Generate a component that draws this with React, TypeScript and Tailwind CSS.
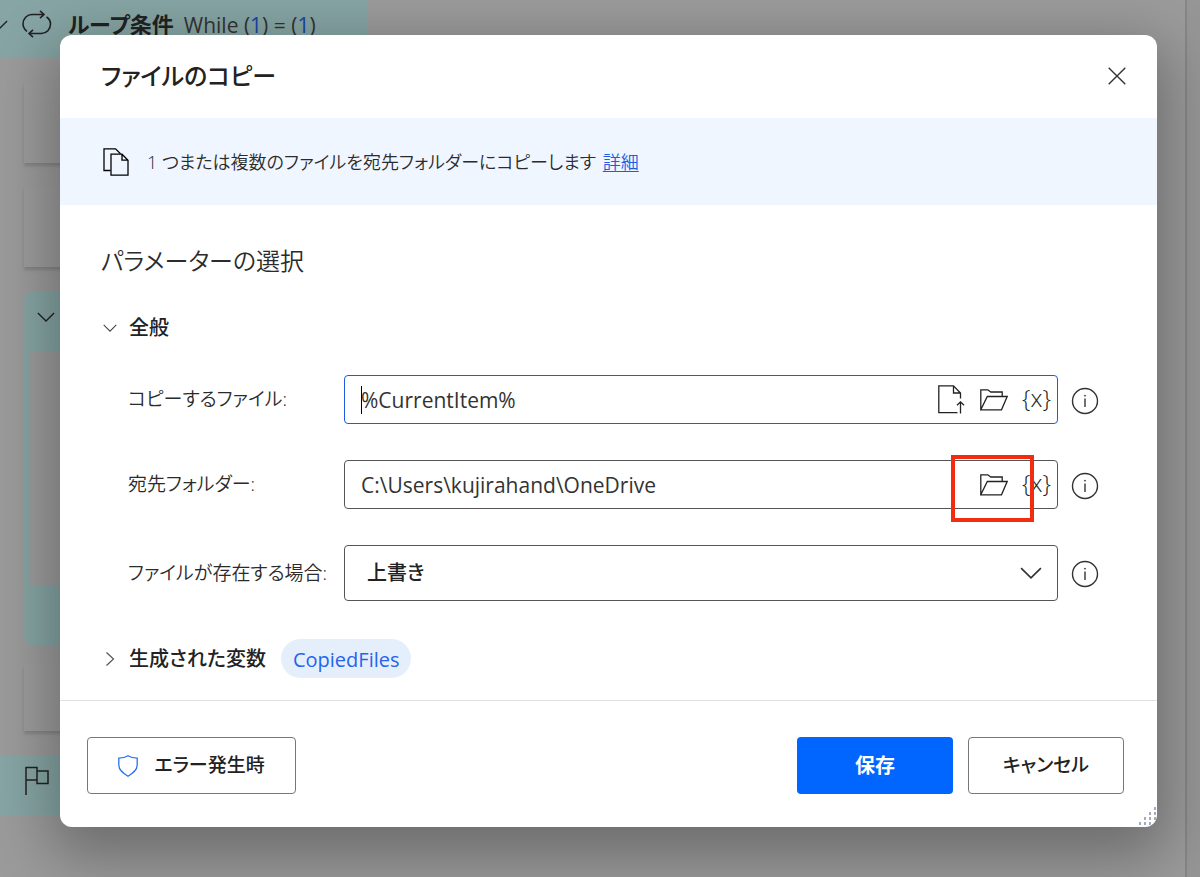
import type { ReactNode } from 'react';

const stroke = {
  fill: 'none',
  stroke: 'currentColor',
  'aria-hidden': true,
} as const;

function LoopIcon() {
  return (
    <svg {...stroke} width="30" height="28" viewBox="0 0 30 28" strokeWidth="1.6">
      <path d="M5 21.500C2 19 1 16.500 1 14 1 8.500 5 4.500 10 4.500H22M18 .8l4 3.700-4 3.700" />
      <path d="M24.500 7c3 2 4 4.500 4 7 0 5.500-4 9.500-9 9.500H7M11 19.800l-4 3.700 4 3.700" />
    </svg>
  );
}

function FlagIcon() {
  return (
    <svg {...stroke} width="24" height="30" viewBox="0 0 24 30" strokeWidth="1.5">
      <path d="M1 29V1.500h11v12.500H1M12 5h11v12.500H12V14" />
    </svg>
  );
}

function ChevronDown({ size, className }: { size: number; className?: string }) {
  return (
    <svg {...stroke} width={size} height={size} viewBox="0 0 20 20" strokeWidth="1.5" className={className}>
      <path d="M1 5.500l9 9 9-9" />
    </svg>
  );
}

function ChevronRight() {
  return (
    <svg {...stroke} width="14" height="14" viewBox="0 0 14 14" strokeWidth="1.2" className="text-[#555]">
      <path d="M3.500 .5l7 6.500-7 6.500" />
    </svg>
  );
}

function CloseIcon() {
  return (
    <svg {...stroke} width="18" height="18" viewBox="0 0 18 18" strokeWidth="1.4" className="text-[#333]">
      <path d="M.7.7l16.600 16.600M17.300.7L.7 17.300" />
    </svg>
  );
}

function CopyIcon() {
  return (
    <svg {...stroke} width="26" height="28" viewBox="0 0 26 28" strokeWidth="1.300">
      <path d="M7.500 22.500H1V.8h11.500l5 5" />
      <path d="M8 6.200h11l6 6V27.200H8zM19 6.200v6h6" />
    </svg>
  );
}

function FileUploadIcon() {
  return (
    <svg {...stroke} width="28" height="30" viewBox="0 0 28 30" strokeWidth="1.3">
      <path d="M19.500 27.700H.8V.8h14.700l7 7.200v5.500M15.500.8V8h7" />
      <path d="M22.500 28.500V17M19 20.300l3.500-3.500 3.500 3.500" />
    </svg>
  );
}

function FolderIcon() {
  return (
    <svg {...stroke} width="28" height="22" viewBox="0 0 28 22" strokeWidth="1.3">
      <path d="M.8 20.800V.8h7l3 2.200h11.400v4.500M.8 20.800L7.300 7.500h19.900l-5.700 13.300z" />
    </svg>
  );
}

function InfoIcon() {
  return (
    <svg {...stroke} width="28" height="28" viewBox="0 0 28 28" strokeWidth="1.4" className="text-[#333]">
      <circle cx="14" cy="14" r="12.500" />
      <path d="M14 11.500v8.500" />
      <circle cx="14" cy="8.700" r=".6" fill="currentColor" strokeWidth=".6" />
    </svg>
  );
}

function ShieldIcon() {
  return (
    <svg {...stroke} width="20" height="22" viewBox="0 0 20 22" strokeWidth="1.3">
      <path d="M10 .8C7.500 2.400 4 3.100.8 3.200V10c0 5.500 4.700 8.500 9.200 11.200 4.500-2.700 9.200-5.700 9.200-11.200V3.200C16 3.100 12.500 2.400 10 .8z" />
    </svg>
  );
}

function ResizeGrip() {
  const dots = [0, 1, 2, 3].flatMap((row) =>
    Array.from({ length: row + 1 }, (_, i) => ({ x: 17 - i * 5, y: row * 5 })),
  );
  return (
    <svg aria-hidden width="20" height="20" viewBox="0 0 20 20" className="absolute right-0 bottom-0">
      {dots.map((d) => (
        <rect key={`${d.x}-${d.y}`} x={d.x} y={d.y} width="2" height="3" fill="#a3acbb" />
      ))}
    </svg>
  );
}

function IconButton({ label, children }: { label: string; children: ReactNode }) {
  return (
    <button type="button" aria-label={label} className="flex shrink-0 items-center justify-center">
      {children}
    </button>
  );
}

function VariableButton() {
  return (
    <button type="button" className="pb-1 text-2xl leading-none font-light">
      {'{x}'}
    </button>
  );
}

function Field({ id, label, children }: { id: string; label: string; children: ReactNode }) {
  return (
    <div className="flex items-center">
      <label htmlFor={id} className="w-[217px] shrink-0 pl-px text-[19px] font-[350] whitespace-nowrap text-[#2b2b2b]">
        {label}
      </label>
      {children}
      <div className="ml-[13px] flex pt-0.5">
        <IconButton label={`${label} 情報`}>
          <InfoIcon />
        </IconButton>
      </div>
    </div>
  );
}

const card = 'w-[900px] bg-[#9c9c9c] shadow-[0_3px_3px_rgba(0,0,0,0.15)]';

function Canvas() {
  return (
    <div aria-hidden className="flex min-h-screen">
      <div className="flex flex-1 flex-col">
        <div className="flex h-[58px] w-[367px] items-start bg-[#86a5a4] text-[#222]">
          <div className="flex w-[22px] justify-start overflow-hidden pt-4">
            <ChevronDown size={18} className="-ml-2.5 shrink-0" />
          </div>
          <div className="pt-2.5">
            <LoopIcon />
          </div>
          <p className="flex items-baseline gap-2.5 pt-2 pl-4 text-[21px] whitespace-nowrap text-[#333]">
            <b className="text-[22px] font-bold text-[#222]">ループ条件</b>
            <span>
              While (<span className="text-[#1743a8]">1</span>) = (<span className="text-[#1743a8]">1</span>)
            </span>
          </p>
        </div>
        <div className="flex flex-col pl-6">
          <div className={`mt-[25px] h-20 ${card}`} />
          <div className={`mt-6 h-20 ${card}`} />
          <div className="-ml-px mt-6 h-[354px] w-[900px] rounded-xl bg-[#86a5a4] pl-1.5 text-[#222]">
            <div className="flex h-[60px] items-center pl-2">
              <ChevronDown size={18} className="-mt-2" />
            </div>
            <div className="h-[234px] bg-[#9c9c9c]" />
          </div>
          <div className={`mt-5 h-[66px] ${card}`} />
        </div>
        <div className="mt-6 flex h-[61px] w-[367px] items-start bg-[#86a5a4] pt-[11px] pl-[25px] text-[#222]">
          <FlagIcon />
        </div>
      </div>
      <div className="w-[15px] border-l-2 border-[#868686] bg-[#969696]" />
    </div>
  );
}

const fieldBox = 'relative flex h-[49px] min-w-0 flex-1 items-center rounded border pr-1.5 pl-4';
const fieldText = 'min-w-0 flex-1 bg-transparent pt-0.5 text-[21px] font-medium text-[#333] outline-none';

function CopyFileDialog() {
  return (
    <section
      role="dialog"
      aria-labelledby="dialog-title"
      className="relative overflow-hidden rounded-xl bg-white shadow-[0_20px_60px_10px_rgba(0,0,0,0.3)]"
    >
      <header className="flex h-[83px] items-center justify-between pr-[31px] pb-0.5 pl-[41px]">
        <h1 id="dialog-title" className="text-2xl font-medium text-[#222]">
          ファイルのコピー
        </h1>
        <IconButton label="閉じる">
          <CloseIcon />
        </IconButton>
      </header>

      <div className="flex h-[87px] items-center gap-[18px] bg-[#f0f6ff] pl-[43px]">
        <CopyIcon />
        <p className="text-lg font-[350] text-[#2b2b2b]">
          1 つまたは複数のファイルを宛先フォルダーにコピーします{' '}
          <a href="#details" className="pl-0.5 text-[#1a5fe0] underline underline-offset-2">
            詳細
          </a>
        </p>
      </div>

      <div className="pt-[38px] pr-[58px] pb-[22px] pl-[41px]">
        <h2 className="text-2xl leading-9 font-[350] text-[#2b2b2b]">パラメーターの選択</h2>

        <button type="button" aria-expanded="true" className="mt-[33px] flex h-8 items-center gap-3 pl-0.5">
          <ChevronDown size={14} className="text-[#444]" />
          <span className="text-xl font-medium text-[#222]">全般</span>
        </button>

        <div className="mt-[31px] flex flex-col gap-9 pl-[26px]">
          <Field id="source" label="コピーするファイル:">
            <div className={`${fieldBox} border-[#1f5ae0]`}>
              <span aria-hidden className="absolute left-4 h-7 w-px bg-black" />
              <input id="source" defaultValue="%CurrentItem%" className={fieldText} />
              <div className="flex items-center gap-3.5 text-[#222]">
                <IconButton label="ファイルの選択">
                  <FileUploadIcon />
                </IconButton>
                <IconButton label="フォルダーの選択">
                  <FolderIcon />
                </IconButton>
                <VariableButton />
              </div>
            </div>
          </Field>

          <Field id="destination" label="宛先フォルダー:">
            <div className={`${fieldBox} border-[#555]`}>
              <input id="destination" defaultValue="C:\Users\kujirahand\OneDrive" className={fieldText} />
              <div className="flex items-center gap-3.5 text-[#222]">
                <IconButton label="フォルダーの選択">
                  <FolderIcon />
                </IconButton>
                <VariableButton />
              </div>
              <div
                aria-hidden
                className="pointer-events-none absolute -top-[6px] right-[23px] h-[67px] w-[83px] border-4 border-[#f22c10]"
              />
            </div>
          </Field>

          <Field id="exists" label="ファイルが存在する場合:">
            <div className="relative flex min-w-0 flex-1 items-center">
              <select
                id="exists"
                className="h-14 w-full appearance-none rounded border border-[#555] bg-white pl-[22px] text-xl font-medium text-[#222]"
              >
                <option>上書き</option>
              </select>
              <ChevronDown size={22} className="pointer-events-none absolute right-4 text-[#333]" />
            </div>
          </Field>
        </div>

        <div className="mt-[38px] flex items-center gap-[15px]">
          <button type="button" aria-expanded="false" className="flex items-center gap-3 pl-0.5">
            <ChevronRight />
            <span className="text-xl font-medium text-[#222]">生成された変数</span>
          </button>
          <span className="flex h-[39px] items-center rounded-full bg-[#e5effc] px-3 pt-0.5 text-xl text-[#2563eb]">
            CopiedFiles
          </span>
        </div>
      </div>

      <footer className="flex items-center gap-[15px] border-t border-[#e2e2e2] pt-9 pr-[33px] pb-[33px] pl-[27px]">
        <button
          type="button"
          className="flex h-[57px] w-[209px] items-center justify-center gap-4 rounded border border-[#777] text-[19px] font-medium text-[#222]"
        >
          <span className="text-[#2b70f0]">
            <ShieldIcon />
          </span>
          エラー発生時
        </button>
        <button type="button" className="ml-auto h-[57px] w-[156px] rounded bg-[#0066ff] text-xl font-bold text-white">
          保存
        </button>
        <button
          type="button"
          className="h-[57px] w-[156px] rounded border border-[#777] text-[19px] font-medium text-[#222]"
        >
          キャンセル
        </button>
      </footer>
      <ResizeGrip />
    </section>
  );
}

export default function App() {
  return (
    <div
      lang="ja"
      className="relative min-h-screen overflow-hidden bg-[#9b9b9b] font-['Open_Sans','Noto_Sans_CJK_JP',sans-serif] [font-feature-settings:'palt']"
    >
      <Canvas />
      <main className="absolute inset-0 pt-[35px] pr-[43px] pl-[60px]">
        <CopyFileDialog />
      </main>
    </div>
  );
}
